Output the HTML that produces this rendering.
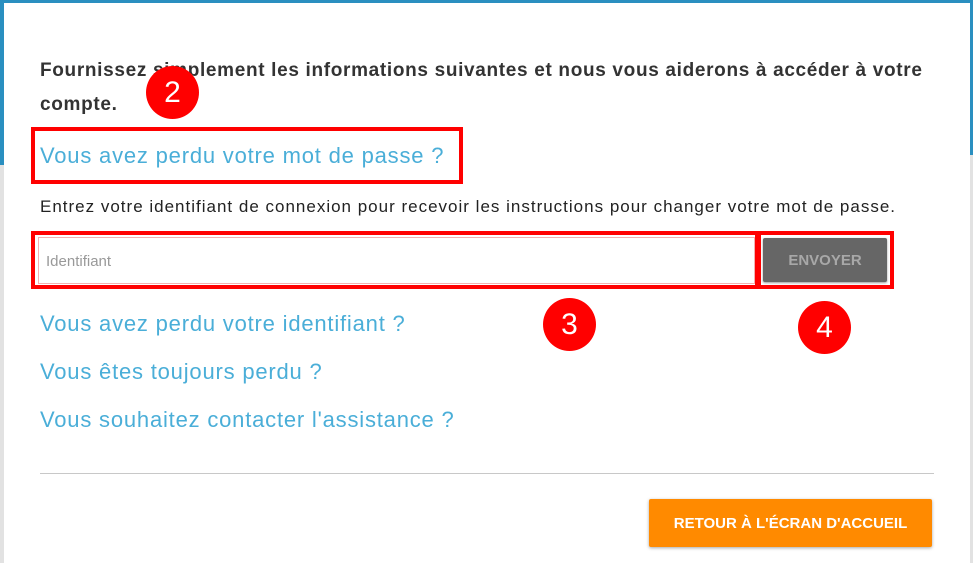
<!DOCTYPE html>
<html><head><meta charset="utf-8"><style>
*{margin:0;padding:0;box-sizing:border-box}
body{width:973px;height:554px;overflow:hidden;background:#e2e2e2;position:relative;font-family:"Liberation Sans",sans-serif}
.abs{position:absolute}
.blueL{left:0;top:0;width:4px;height:165px;background:#2a8fc0}
.blueR{right:0;top:0;width:4px;height:155px;background:#2a8fc0}
.blueT{left:0;top:0;width:973px;height:3px;background:#2a8fc0}
.modal{left:4px;top:3px;width:966px;height:560px;background:#fff}
.t{color:#333;font-weight:bold;font-size:19px;letter-spacing:0.67px;white-space:nowrap}
.link{color:#4aaed8;font-size:22px;letter-spacing:0.8px;white-space:nowrap}
.rb{border:4px solid #f00}
.circ{width:53px;height:53px;border-radius:50%;background:#f00;color:#fff;font-size:30px;text-align:center;line-height:53px}
</style></head><body>
<div class="abs blueT"></div><div class="abs blueL"></div><div class="abs blueR"></div>
<div class="abs modal"></div>
<div class="abs t" style="left:40px;top:60px">Fournissez simplement les informations suivantes et nous vous aiderons à accéder à votre</div>
<div class="abs t" style="left:40px;top:94px">compte.</div>
<div class="abs rb" style="left:31px;top:127px;width:432px;height:57px"></div>
<div class="abs link" style="left:40px;top:143px">Vous avez perdu votre mot de passe ?</div>
<div class="abs" style="left:40px;top:197px;font-size:17px;letter-spacing:1px;color:#222;white-space:nowrap">Entrez votre identifiant de connexion pour recevoir les instructions pour changer votre mot de passe.</div>
<div class="abs rb" style="left:31px;top:231px;width:728px;height:58px"></div>
<div class="abs" style="left:38px;top:237px;width:717px;height:47px;border:1px solid #f3b0b0;background:#fff"></div>
<div class="abs" style="left:46px;top:253px;font-size:15px;color:#999">Identifiant</div>
<div class="abs rb" style="left:757px;top:231px;width:137px;height:58px"></div>
<div class="abs" style="left:763px;top:238px;width:124px;height:44px;background:#666;border-radius:2px;box-shadow:0 1px 2px rgba(0,0,0,.4);color:#a8a8a8;font-weight:bold;font-size:15px;text-align:center;line-height:46px">ENVOYER</div>
<div class="abs link" style="left:40px;top:311px">Vous avez perdu votre identifiant ?</div>
<div class="abs link" style="left:40px;top:359px">Vous êtes toujours perdu ?</div>
<div class="abs link" style="left:40px;top:407px">Vous souhaitez contacter l'assistance ?</div>
<div class="abs" style="left:40px;top:473px;width:894px;height:1px;background:#c8c8c8"></div>
<div class="abs" style="left:649px;top:499px;width:283px;height:48px;background:#ff8a00;border-radius:2px;box-shadow:0 1px 3px rgba(0,0,0,.35);color:#fff;font-weight:bold;font-size:15px;text-align:center;line-height:50px">RETOUR À L'ÉCRAN D'ACCUEIL</div>
<div class="abs circ" style="left:146px;top:66px">2</div>
<div class="abs circ" style="left:543px;top:298px">3</div>
<div class="abs circ" style="left:798px;top:301px">4</div>
</body></html>
